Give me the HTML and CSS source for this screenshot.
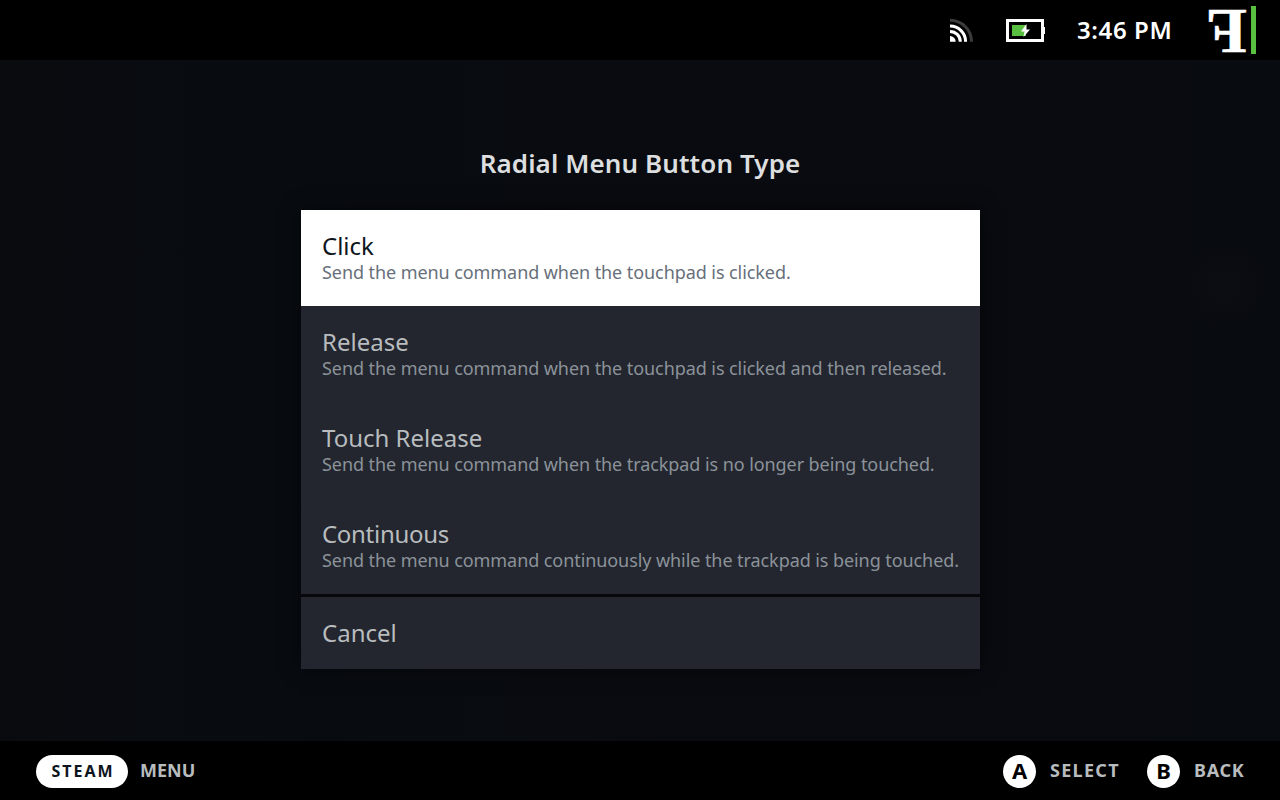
FILE: index.html
```html
<!DOCTYPE html>
<html lang="en">
<head>
    <meta charset="UTF-8">
    <meta name="viewport" content="width=device-width, initial-scale=1.0">
    <title>Radial Menu Button Type</title>
    <link rel="stylesheet" href="styles.css">
</head>
<body>

<header>
    <svg class="signal" width="24" height="24" viewBox="0 0 24 24" fill="none" stroke="#fff" stroke-width="3">
        <path d="M0 2.2 A21.5 21.5 0 0 1 21.5 23.7" stroke="#3c3c3c"/>
        <path d="M0 8.1 A15.6 15.6 0 0 1 15.6 23.7"/>
        <path d="M0 13.4 A10.3 10.3 0 0 1 10.3 23.7"/>
        <path d="M0 18 A5.7 5.7 0 0 1 5.7 23.7 H0 Z" fill="#fff" stroke="none"/>
    </svg>
    <svg class="battery" width="40" height="24" viewBox="0 0 40 24">
        <rect x="1.5" y="2.5" width="35" height="20" fill="none" stroke="#fff" stroke-width="3"/>
        <rect x="37" y="9" width="2" height="7" fill="#fff"/>
        <rect x="6" y="7" width="14" height="11" fill="#59bf40"/>
        <path d="M20.5 6 L15 13.5 H18.5 L17.5 19 L24 11.5 H20.5 Z" fill="#fff"/>
    </svg>
    <span class="clock">3:46 PM</span>
    <div class="avatar"><span>F</span></div>
</header>

<main>
    <h1>Radial Menu Button Type</h1>

    <!-- Option list -->
    <div class="dialog">
        <div class="options">
            <div class="option selected">
                <div class="label">Click</div>
                <div class="desc">Send the menu command when the touchpad is clicked.</div>
            </div>
            <div class="option">
                <div class="label">Release</div>
                <div class="desc">Send the menu command when the touchpad is clicked and then released.</div>
            </div>
            <div class="option">
                <div class="label">Touch Release</div>
                <div class="desc">Send the menu command when the trackpad is no longer being touched.</div>
            </div>
            <div class="option">
                <div class="label tight">Continuous</div>
                <div class="desc">Send the menu command continuously while the trackpad is being touched.</div>
            </div>
        </div>
        <div class="option cancel">
            <div class="label">Cancel</div>
        </div>
    </div>
</main>

<footer>
    <div class="steam">STEAM</div>
    <span class="hint menu">MENU</span>
    <div class="key">A</div>
    <span class="hint select">SELECT</span>
    <div class="key">B</div>
    <span class="hint back">BACK</span>
</footer>

</body>
</html>
```

FILE: styles.css
```css
* {
    box-sizing: border-box;
}

body {
    margin: 0;
    width: 1280px;
    height: 800px;
    overflow: hidden;
    display: flex;
    flex-direction: column;
    font-family: "Noto Sans", sans-serif;
    background-color: #090b10;
    color: #b8bcbf;
}

/* Top bar */
header {
    height: 60px;
    background-color: #000;
    display: flex;
    align-items: center;
    justify-content: flex-end;
    padding-right: 24px;
}

.signal {
    margin-right: 32px;
}

.battery {
    margin-right: 31px;
}

.clock {
    color: #fff;
    font-size: 24px;
    font-weight: 600;
    line-height: 32px;
    letter-spacing: 0.6px;
    width: 97px;
    margin-right: 28px;
    white-space: nowrap;
}

.avatar {
    width: 54px;
    height: 48px;
    border-right: 5px solid #59bf40;
    display: flex;
    align-items: center;
    justify-content: center;
}

.avatar span {
    transform: scaleX(-1.05);
    font-family: "Liberation Serif", serif;
    font-size: 64px;
    font-weight: bold;
    line-height: 48px;
    padding-top: 2px;
    color: #fff;
    -webkit-text-stroke: 0.5px #fff;
}

/* Dialog */
main {
    flex: 1;
    display: flex;
    flex-direction: column;
    align-items: center;
    background: radial-gradient(circle at 1225px 225px, #0c0d12 0, rgba(12, 13, 18, 0) 40px), linear-gradient(90deg, #090b0f 0, #080c11 25%, #090b10 50%, #080b10 100%);
}

h1 {
    margin: 85px 0 29px;
    font-size: 26px;
    font-weight: 600;
    line-height: 36px;
    letter-spacing: 0.1px;
    color: #dcdedf;
}

.dialog {
    width: 679px;
    margin-left: 1px;
    background-color: #07080c;
    box-shadow: 0 0 18px rgba(0, 0, 0, 0.6);
}

.option {
    height: 96px;
    padding: 22px 21px 0;
    background-color: #23262e;
    white-space: nowrap;
}

.label {
    font-size: 24px;
    line-height: 28px;
}

.tight {
    letter-spacing: -0.3px;
}

.desc {
    font-size: 18px;
    line-height: 24px;
    letter-spacing: -0.075px;
    color: #8b929a;
}

.selected {
    background-color: #fff;
}

.selected .label {
    color: #0e141b;
}

.selected .desc {
    color: #67707b;
}

.cancel {
    height: 72px;
    margin-top: 3px;
}

/* Bottom bar */
footer {
    height: 59px;
    background-color: #000;
    display: flex;
    align-items: center;
    padding: 1px 35px 0 36px;
    font-weight: 700;
}

.steam {
    width: 92px;
    height: 33px;
    border-radius: 17px;
    background-color: #fff;
    color: #0e141b;
    font-size: 16px;
    line-height: 33px;
    letter-spacing: 2px;
    padding-left: 2px;
    text-align: center;
}

.hint {
    font-size: 18px;
    line-height: 24px;
    padding-bottom: 2px;
}

.menu {
    margin-left: 12px;
    margin-right: auto;
}

.key {
    width: 33px;
    height: 33px;
    border-radius: 50%;
    background-color: #fff;
    color: #000;
    font-size: 22px;
    line-height: 31px;
    text-align: center;
}

.select {
    width: 70px;
    margin: 0 27px 0 14px;
    letter-spacing: 1.3px;
}

.back {
    width: 51px;
    margin-left: 14px;
    letter-spacing: 0.7px;
}
```
